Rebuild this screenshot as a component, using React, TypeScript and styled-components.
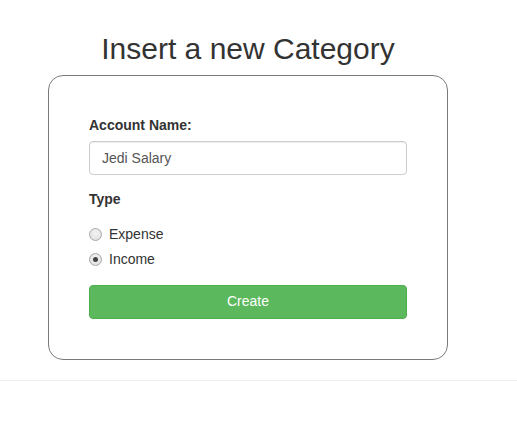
import React from "react";
import styled, { createGlobalStyle } from "styled-components";

const GlobalStyle = createGlobalStyle`
  * { box-sizing: border-box; }
  html, body { margin: 0; padding: 0; background: #fff; }
  body {
    font-family: "Liberation Sans", Arial, sans-serif;
    font-size: 14px;
    line-height: 1.42857;
    color: #333;
  }
`;

const Page = styled.div`
  padding-top: 32px;
`;

const Column = styled.div`
  width: 400px;
  margin-left: 48px;
  display: flex;
  flex-direction: column;
`;

const Title = styled.h2`
  margin: 0 0 10px;
  font-size: 30px;
  font-weight: 400;
  line-height: 1.1;
  text-align: center;
  color: #333;
`;

const Card = styled.form`
  border: 1px solid #7a7a7a;
  border-radius: 15px;
  padding: 40px;
  display: flex;
  flex-direction: column;
`;

const Group = styled.div`
  margin-bottom: 15px;
`;

const Label = styled.label`
  display: inline-block;
  margin-bottom: 5px;
  font-weight: 700;
`;

const TextInput = styled.input`
  display: block;
  width: 100%;
  height: 34px;
  padding: 6px 12px;
  font-family: inherit;
  font-size: 14px;
  line-height: 1.42857;
  color: #555;
  background: #fff;
  border: 1px solid #ccc;
  border-radius: 4px;
  box-shadow: inset 0 1px 1px rgba(0, 0, 0, 0.075);
  outline: none;
`;

const RadioList = styled.div`
  display: flex;
  flex-direction: column;
  gap: 5px;
  margin-top: 10px;
`;

const RadioRow = styled.label`
  display: flex;
  align-items: center;
  gap: 7px;
  min-height: 20px;
  cursor: pointer;
`;

const Radio = styled.input`
  appearance: none;
  margin: 0;
  width: 13px;
  height: 13px;
  border-radius: 50%;
  border: 1px solid #a8a8a8;
  background: radial-gradient(circle at 50% 40%, #f4f4f4 0%, #dcdcdc 100%);
  display: grid;
  place-items: center;
  &:checked::after {
    content: "";
    width: 5px;
    height: 5px;
    border-radius: 50%;
    background: #444;
  }
`;

const RadioText = styled.span`
  color: #333;
`;

const Button = styled.button`
  display: block;
  width: 100%;
  height: 34px;
  padding: 6px 12px;
  font-family: inherit;
  font-size: 14px;
  line-height: 1.42857;
  color: #fff;
  background: #5cb85c;
  border: 1px solid #4cae4c;
  border-radius: 4px;
  cursor: pointer;
`;

const Rule = styled.hr`
  margin: 20px 0 0;
  border: 0;
  border-top: 1px solid #eee;
`;

export default function App() {
  return (
    <>
      <GlobalStyle />
      <Page>
        <Column>
          <Title>Insert a new Category</Title>
          <Card onSubmit={(e) => e.preventDefault()}>
            <Group>
              <Label htmlFor="name">Account Name:</Label>
              <TextInput id="name" defaultValue="Jedi Salary" />
            </Group>
            <Group>
              <Label>Type</Label>
              <RadioList>
                <RadioRow>
                  <Radio type="radio" name="type" value="expense" />
                  <RadioText>Expense</RadioText>
                </RadioRow>
                <RadioRow>
                  <Radio type="radio" name="type" value="income" defaultChecked />
                  <RadioText>Income</RadioText>
                </RadioRow>
              </RadioList>
            </Group>
            <Button type="submit">Create</Button>
          </Card>
        </Column>
        <Rule />
      </Page>
    </>
  );
}
